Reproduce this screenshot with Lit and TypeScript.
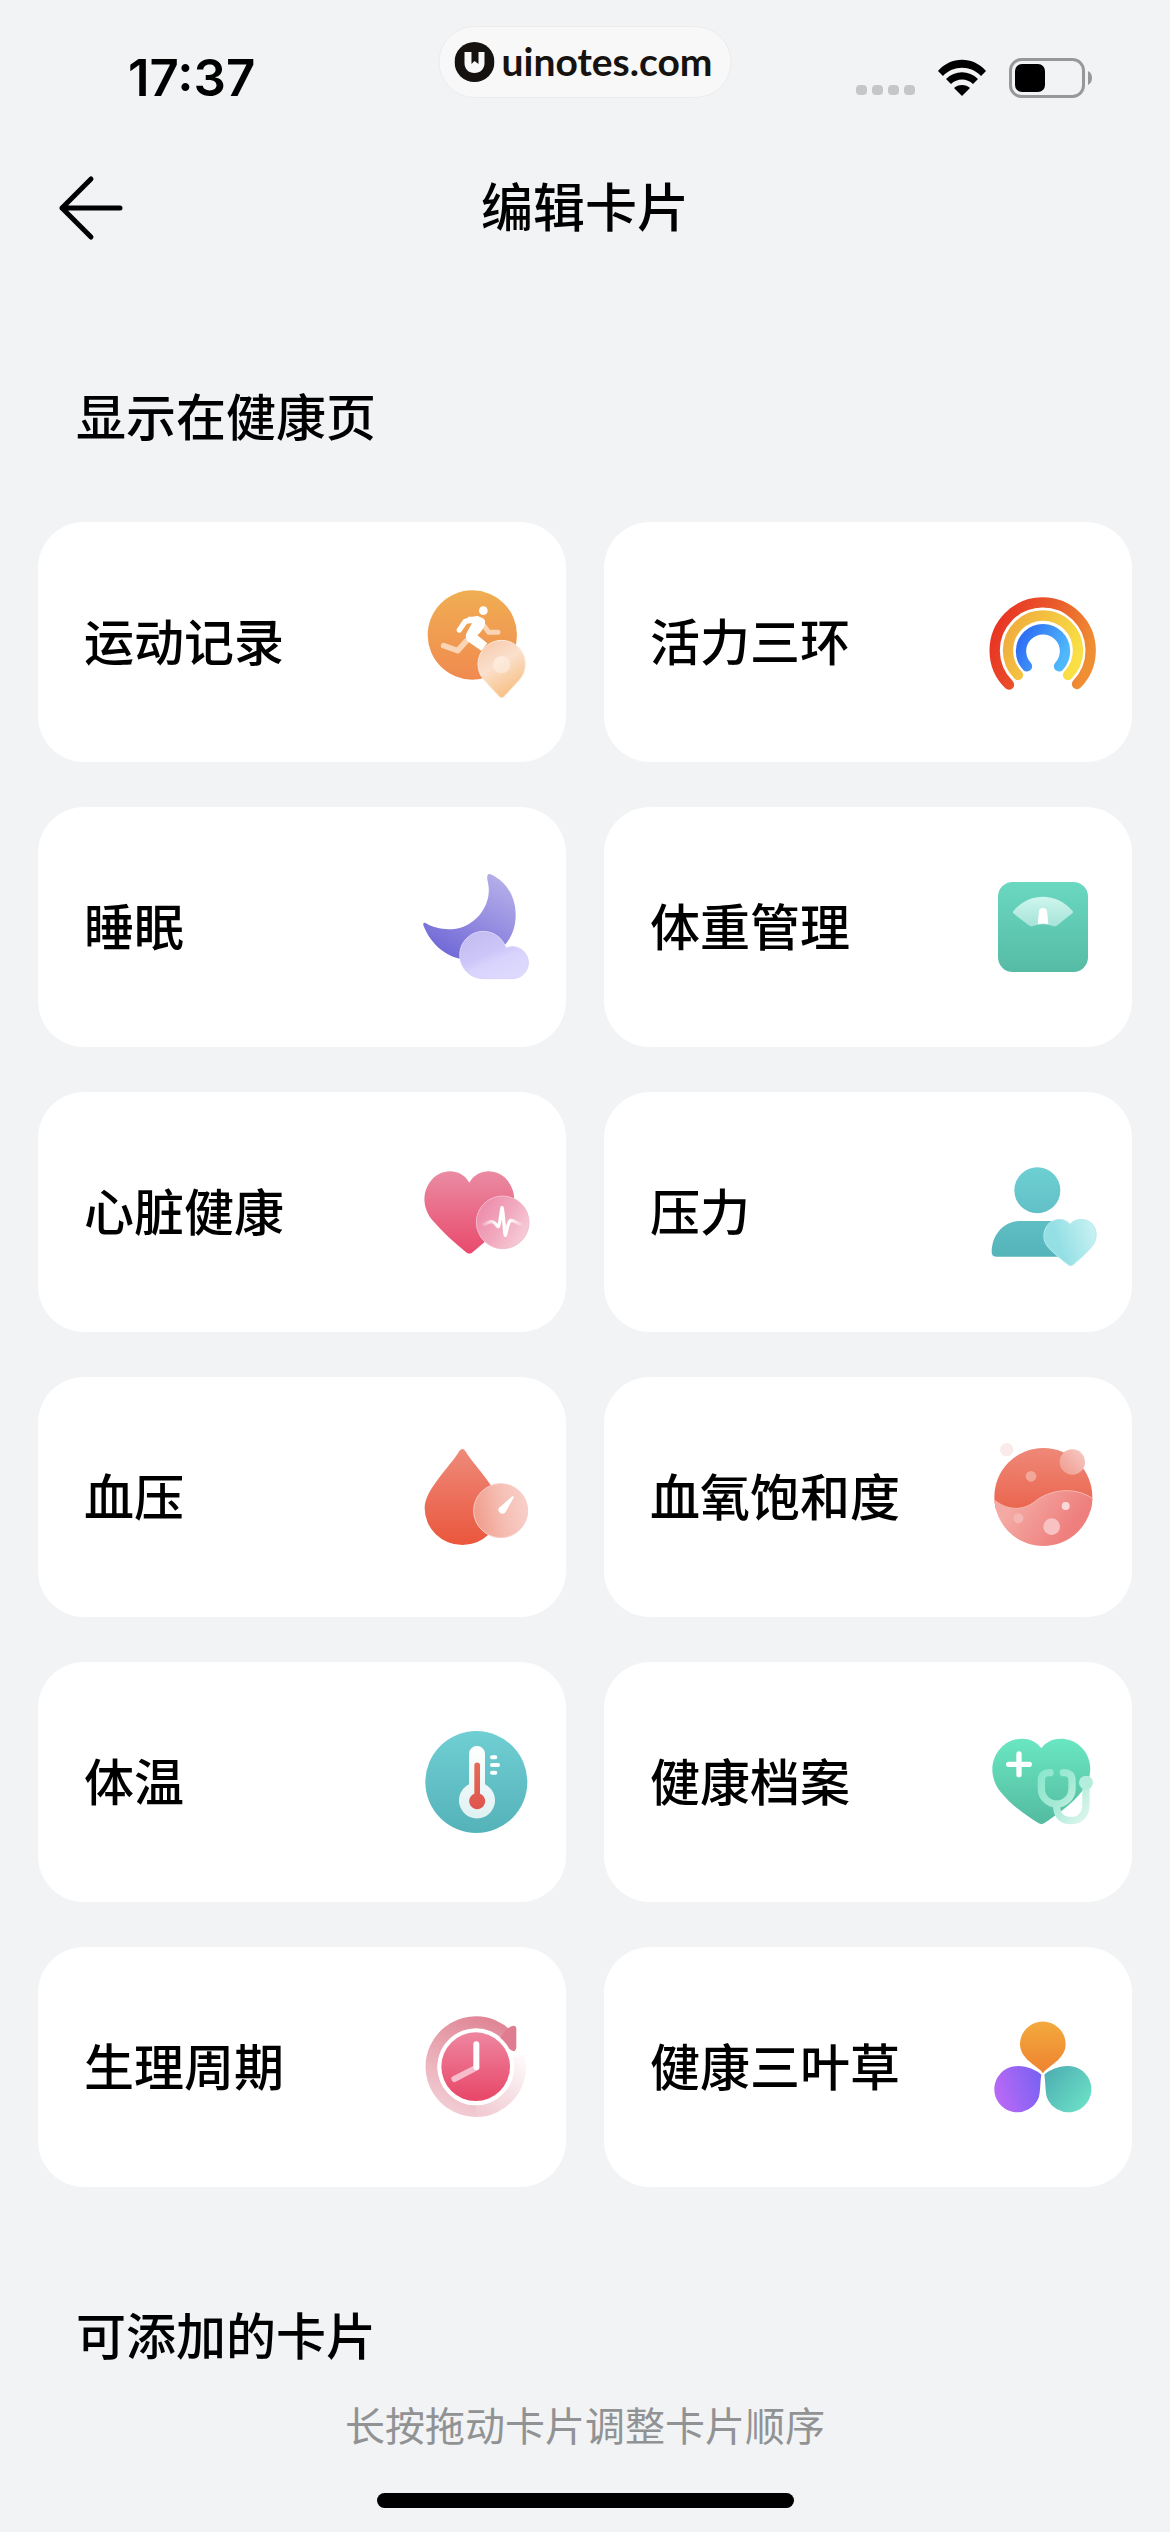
import { LitElement, css, html, svg } from 'lit';
import { customElement, property } from 'lit/decorators.js';

// Each drawing carries its own viewBox, always 360 units square.
const icons = {
  run: {
    box: '48 66 360 360',
    art: svg`
      <defs>
        <linearGradient id="a" x1="0" y1="0" x2="0" y2="1"><stop offset="0" stop-color="#f0ae52" /><stop offset="1" stop-color="#f08a50" /></linearGradient>
        <linearGradient id="b" x1="0" y1="0" x2="0.5" y2="1"><stop offset="0" stop-color="#f5c6a8" /><stop offset="0.5" stop-color="#fbe0cc" /><stop offset="1" stop-color="#f7c187" /></linearGradient>
        <linearGradient id="c" x1="0" y1="0" x2="1" y2="1"><stop offset="0" stop-color="#fdeee2" /><stop offset="1" stop-color="#fbe3cf" /></linearGradient>
      </defs>
      <circle cx="217" cy="225" r="134" fill="url(#a)" />
      <path d="M131 257 L173 272 L198 244" fill="none" stroke="#f9d5b5" stroke-width="17" stroke-linecap="round" stroke-linejoin="round" />
      <path d="M254 200 L266 217 L294 217" fill="none" stroke="#f9d5b5" stroke-width="15" stroke-linecap="round" stroke-linejoin="round" />
      <circle cx="250" cy="152" r="13" fill="#fff" />
      <path d="M178 210 L196 184 L232 176" fill="none" stroke="#fff" stroke-width="16" stroke-linecap="round" stroke-linejoin="round" />
      <path d="M204 170 H236 Q260 174 255 192 Q250 210 232 226 L262 250 L244 272 L206 246 Q192 234 200 218 L216 190 L200 190 Z" fill="#fff" />
      <path d="M305 413 Q300 413 295 407 L252 360 Q234 340 234 312 A71 71 0 0 1 376 312 Q376 340 358 360 L315 407 Q310 413 305 413 Z" fill="url(#b)" stroke="#fdeadb" stroke-width="3" />
      <circle cx="305" cy="314" r="26" fill="url(#c)" />`,
  },
  rings: {
    box: '66 66 360 360',
    art: svg`
      <defs>
        <linearGradient id="a" x1="0" y1="0.3" x2="1" y2="0.6"><stop offset="0" stop-color="#e83424" /><stop offset="0.5" stop-color="#ea5a2b" /><stop offset="1" stop-color="#f08e33" /></linearGradient>
        <linearGradient id="b" x1="0" y1="0.3" x2="1" y2="0.7"><stop offset="0" stop-color="#f0ae3e" /><stop offset="1" stop-color="#f9e045" /></linearGradient>
        <linearGradient id="c" x1="0" y1="0.3" x2="1" y2="0.7"><stop offset="0" stop-color="#2f70f5" /><stop offset="1" stop-color="#4fb8fb" /></linearGradient>
      </defs>
      <g fill="none" stroke-width="31" stroke-linecap="round">
        <path d="M147 374 A144 144 0 1 1 351 372" stroke="url(#a)" />
        <path d="M174 345 A105 105 0 1 1 324 345" stroke="url(#b)" />
        <path d="M201 319 A66 66 0 1 1 297 319" stroke="url(#c)" />
      </g>`,
  },
  sleep: {
    box: '48 51 360 360',
    art: svg`
      <defs>
        <linearGradient id="a" x1="0.9" y1="0" x2="0.3" y2="1"><stop offset="0" stop-color="#b9b3ea" /><stop offset="0.45" stop-color="#9a92e2" /><stop offset="1" stop-color="#6f68d6" /></linearGradient>
        <linearGradient id="b" x1="0.2" y1="0" x2="0.8" y2="1"><stop offset="0" stop-color="#c3bcf0" /><stop offset="0.45" stop-color="#cdc6f8" /><stop offset="0.6" stop-color="#d8d3fd" /><stop offset="1" stop-color="#dedafc" /></linearGradient>
      </defs>
      <path d="M262 77 Q264 69 272 73 C322 96 348 144 347 198 C346 276 286 330 210 330 C144 330 92 284 70 226 Q68 215 77 219 C108 238 152 244 190 230 C240 210 270 160 266 112 C265 98 260 88 262 77 Z" fill="url(#a)" />
      <path d="M252 386 A71 71 0 1 1 318 294 A48 48 0 1 1 336 386 Z" fill="url(#b)" stroke="#d9d4fa" stroke-width="3" />`,
  },
  scale: {
    box: '66 51 360 360',
    art: svg`
      <defs>
        <linearGradient id="a" x1="0" y1="0" x2="0" y2="1"><stop offset="0" stop-color="#6bd8c1" /><stop offset="1" stop-color="#56bba5" /></linearGradient>
        <linearGradient id="b" x1="0" y1="0" x2="0" y2="1"><stop offset="0" stop-color="#cef6ee" /><stop offset="1" stop-color="#a6e3d7" /></linearGradient>
      </defs>
      <rect x="114" y="96" width="270" height="270" rx="44" fill="url(#a)" />
      <path d="M160 190 Q157 186 161 182 C208 126 290 126 337 182 Q341 186 337 190 L292 226 Q286 231 279 228 Q249 218 219 228 Q212 231 206 226 Z" fill="url(#b)" />
      <path d="M233 222 L237 183 Q239 174 249 174 Q259 174 261 183 L265 222 Q249 219 233 222 Z" fill="#fff" />`,
  },
  heart: {
    box: '48 36 360 360',
    art: svg`
      <defs>
        <linearGradient id="a" x1="0" y1="0" x2="0" y2="1"><stop offset="0" stop-color="#ea8ba3" /><stop offset="1" stop-color="#e94a6c" /></linearGradient>
        <linearGradient id="b" x1="0.1" y1="0.3" x2="0.9" y2="0.8"><stop offset="0" stop-color="#ee90ae" /><stop offset="0.5" stop-color="#f1aabf" /><stop offset="1" stop-color="#f6cbd7" /></linearGradient>
        <linearGradient id="c" gradientUnits="userSpaceOnUse" x1="250" y1="0" x2="364" y2="0"><stop offset="0" stop-color="#fff" stop-opacity="0.2" /><stop offset="0.35" stop-color="#fff" /><stop offset="0.7" stop-color="#fff" /><stop offset="1" stop-color="#fff" stop-opacity="0.2" /></linearGradient>
      </defs>
      <path d="M208 128 C186 88 134 84 102 112 C64 150 64 202 100 244 C130 278 162 308 200 338 Q208 343 216 338 C254 308 286 278 316 244 C352 202 352 150 314 112 C282 84 230 88 208 128 Z" fill="url(#a)" />
      <circle cx="308" cy="247" r="79" fill="url(#b)" stroke="#f5bccb" stroke-width="3" />
      <path d="M252 253 C262 250 268 243 276 245 C286 247 290 258 295 260 C300 255 303 215 306 203 C311 215 312 275 316 286 C320 275 322 250 332 241 C344 240 350 250 362 252" fill="none" stroke="url(#c)" stroke-width="10" stroke-linecap="round" stroke-linejoin="round" />`,
  },
  stress: {
    box: '66 36 360 360',
    art: svg`
      <defs>
        <linearGradient id="a" gradientUnits="userSpaceOnUse" x1="0" y1="82" x2="0" y2="350"><stop offset="0" stop-color="#6ecfd3" /><stop offset="1" stop-color="#55b3ba" /></linearGradient>
        <linearGradient id="b" x1="0.3" y1="0.6" x2="1" y2="0.4"><stop offset="0" stop-color="#93dfe4" /><stop offset="1" stop-color="#c6f1f2" /></linearGradient>
      </defs>
      <circle cx="232" cy="151" r="69" fill="url(#a)" />
      <path d="M95 336 C95 284 132 243 182 243 H300 V350 H108 Q95 350 95 336 Z" fill="url(#a)" />
      <path d="M330 253 C316 234 286 234 268 249 C246 271 246 304 268 326 C286 344 308 362 326 375 Q332 379 338 375 C356 360 374 344 390 326 C414 302 414 269 394 249 C376 234 344 234 330 253 Z" fill="url(#b)" stroke="#b4ebee" stroke-width="3" />`,
  },
  pressure: {
    box: '0 0 360 360',
    art: svg`
      <defs>
        <linearGradient id="a" x1="0" y1="0" x2="0" y2="1"><stop offset="0" stop-color="#ee8a7a" /><stop offset="1" stop-color="#ea563c" /></linearGradient>
        <linearGradient id="b" x1="0" y1="0.6" x2="1" y2="0.4"><stop offset="0" stop-color="#f09c8a" /><stop offset="0.5" stop-color="#f5bcb1" /><stop offset="1" stop-color="#f8d0ca" /></linearGradient>
      </defs>
      <path d="M130 42 Q139 30 148 42 C178 92 252 158 252 214 A113 110 0 0 1 26 214 C26 158 100 92 130 42 Z" fill="url(#a)" />
      <circle cx="254" cy="221" r="81" fill="url(#b)" stroke="#f8cdc5" stroke-width="3" />
      <path d="M286 180 Q293 173 293 182 L269 225 A12 12 0 0 1 248 214 Z" fill="#fff" />`,
  },
  oxygen: {
    box: '0 0 360 360',
    art: svg`
      <defs>
        <linearGradient id="a" gradientUnits="userSpaceOnUse" x1="0" y1="33" x2="0" y2="210"><stop offset="0" stop-color="#ef8878" /><stop offset="1" stop-color="#ea6750" /></linearGradient>
        <linearGradient id="b" gradientUnits="userSpaceOnUse" x1="90" y1="200" x2="240" y2="310"><stop offset="0" stop-color="#f4aaa4" /><stop offset="1" stop-color="#ee7f7d" /></linearGradient>
        <linearGradient id="c" x1="0" y1="1" x2="1" y2="0"><stop offset="0" stop-color="#f09a8c" /><stop offset="1" stop-color="#f6cac6" /></linearGradient>
        <clipPath id="d"><circle cx="184" cy="180" r="147" /></clipPath>
      </defs>
      <g clip-path="url(#d)">
        <rect x="30" y="30" width="310" height="190" fill="url(#a)" />
        <path d="M34 187 C76 222 122 222 158 194 C202 158 278 146 334 186 V330 H34 Z" fill="url(#b)" stroke="#f6b9b2" stroke-width="3" />
      </g>
      <circle cx="271" cy="75" r="38" fill="url(#c)" />
      <circle cx="74" cy="38" r="20" fill="#fbeaea" />
      <circle cx="147" cy="118" r="16" fill="#f3a79b" />
      <circle cx="251" cy="207" r="12" fill="#fad9d8" />
      <circle cx="109" cy="244" r="15" fill="#f5b7b4" />
      <circle cx="209" cy="269" r="25" fill="#f7c2c1" />`,
  },
  temperature: {
    box: '0 0 360 360',
    art: svg`
      <defs>
        <linearGradient id="a" x1="0" y1="0" x2="0" y2="1"><stop offset="0" stop-color="#70cfd3" /><stop offset="1" stop-color="#54b2b9" /></linearGradient>
        <linearGradient id="b" x1="0" y1="0" x2="0" y2="1"><stop offset="0" stop-color="#fff" /><stop offset="1" stop-color="#dff1f2" /></linearGradient>
        <linearGradient id="c" x1="0" y1="0" x2="0" y2="1"><stop offset="0" stop-color="#e56b55" /><stop offset="1" stop-color="#e0554f" /></linearGradient>
      </defs>
      <circle cx="181" cy="180" r="153" fill="url(#a)" />
      <path d="M159 96 A24 24 0 0 1 207 96 V187 A54 54 0 1 1 159 187 Z" fill="url(#b)" />
      <path d="M175 130 A8 8 0 0 1 192 130 V215 A24 24 0 1 1 175 215 Z" fill="url(#c)" />
      <path d="M228 106 H238 M228 129 H246 M228 152 H238" stroke="#fff" stroke-width="12" stroke-linecap="round" />`,
  },
  records: {
    box: '0 0 360 360',
    art: svg`
      <defs>
        <linearGradient id="a" x1="0" y1="0" x2="0" y2="1"><stop offset="0" stop-color="#6ae6c2" /><stop offset="1" stop-color="#54bba0" /></linearGradient>
        <linearGradient id="b" gradientUnits="userSpaceOnUse" x1="180" y1="150" x2="320" y2="260"><stop offset="0" stop-color="#8ce8cd" /><stop offset="0.5" stop-color="#a6e9d5" /><stop offset="1" stop-color="#d5f4ea" /></linearGradient>
      </defs>
      <path d="M178 79 C152 42 96 42 62 72 C20 112 24 168 54 208 C86 248 126 276 170 304 Q178 309 186 304 C226 278 270 246 300 208 C332 168 336 110 294 72 C260 42 204 42 178 79 Z" fill="url(#a)" />
      <path d="M111 96 V158 M80 127 H142" stroke="#fff" stroke-width="16" stroke-linecap="round" />
      <g fill="none" stroke="url(#b)" stroke-width="22" stroke-linecap="round">
        <path d="M204 152 Q178 150 178 176 V200 A46 46 0 0 0 270 200 V176 Q270 150 244 152" />
        <path d="M224 252 C224 280 240 296 268 296 C294 296 312 276 312 250 V184" stroke-linecap="butt" />
      </g>
      <circle cx="312" cy="182" r="21" fill="#b5eddd" />`,
  },
  cycle: {
    box: '0 0 360 360',
    art: svg`
      <defs>
        <linearGradient id="a" gradientUnits="userSpaceOnUse" x1="240" y1="40" x2="130" y2="320"><stop offset="0" stop-color="#df8594" /><stop offset="0.5" stop-color="#eaaab5" /><stop offset="1" stop-color="#f1ccd4" /></linearGradient>
        <linearGradient id="b" gradientUnits="userSpaceOnUse" x1="310" y1="140" x2="200" y2="320"><stop offset="0" stop-color="#fefafb" /><stop offset="1" stop-color="#f1ccd4" /></linearGradient>
        <linearGradient id="c" x1="0" y1="0" x2="0" y2="1"><stop offset="0" stop-color="#ee86a0" /><stop offset="1" stop-color="#e84668" /></linearGradient>
      </defs>
      <path d="M179 312 A133 133 0 0 0 308 146" fill="none" stroke="url(#b)" stroke-width="36" />
      <path d="M180 312 A133 133 0 1 1 282 94" fill="none" stroke="url(#a)" stroke-width="36" />
      <path d="M272 66 L286 58 Q300 52 301 66 V120 Q299 138 286 130 L244 104 Z" fill="#e07c90" />
      <circle cx="179" cy="180" r="115" fill="#fff" />
      <circle cx="179" cy="179" r="103" fill="url(#c)" />
      <path d="M115 216 L181 182" stroke="#f6bccb" stroke-width="18" stroke-linecap="round" />
      <path d="M181 112 V180" stroke="#fff" stroke-width="18" stroke-linecap="round" />`,
  },
  clover: {
    box: '0 0 360 360',
    art: svg`
      <defs>
        <linearGradient id="a" x1="0" y1="0" x2="0" y2="1"><stop offset="0" stop-color="#f2aa3e" /><stop offset="1" stop-color="#ef822f" /></linearGradient>
        <linearGradient id="b" x1="0" y1="0.6" x2="1" y2="0.3"><stop offset="0" stop-color="#bb69f5" /><stop offset="1" stop-color="#7a62f3" /></linearGradient>
        <linearGradient id="c" x1="0" y1="0.2" x2="1" y2="1"><stop offset="0" stop-color="#4fb0b2" /><stop offset="1" stop-color="#6fe6c9" /></linearGradient>
      </defs>
      <path d="M183 199 C170 178 114 158 114 112 A68 68 0 0 1 251 112 C251 158 196 178 183 199 Z" fill="url(#a)" />
      <path d="M178 203 C164 190 130 174 98 178 A69 69 0 1 0 170 272 C176 252 174 226 178 203 Z" fill="url(#b)" />
      <path d="M187 203 C201 190 235 174 267 178 A69 69 0 1 1 195 272 C189 252 191 226 187 203 Z" fill="url(#c)" />`,
  },
};

type IconName = keyof typeof icons;

const shownCards: { label: string; icon: IconName }[] = [
  { label: '运动记录', icon: 'run' },
  { label: '活力三环', icon: 'rings' },
  { label: '睡眠', icon: 'sleep' },
  { label: '体重管理', icon: 'scale' },
  { label: '心脏健康', icon: 'heart' },
  { label: '压力', icon: 'stress' },
  { label: '血压', icon: 'pressure' },
  { label: '血氧饱和度', icon: 'oxygen' },
  { label: '体温', icon: 'temperature' },
  { label: '健康档案', icon: 'records' },
  { label: '生理周期', icon: 'cycle' },
  { label: '健康三叶草', icon: 'clover' },
];

@customElement('health-card')
export class HealthCard extends LitElement {
  static styles = css`
    :host {
      display: flex;
      align-items: center;
      justify-content: space-between;
      box-sizing: border-box;
      height: 240px;
      padding: 0 30px 0 46px;
      border-radius: 46px;
      background: #fff;
    }

    .label {
      padding-bottom: 6px;
      font-size: 50px;
      font-weight: 500;
      line-height: 64px;
      white-space: nowrap;
    }

    .icon {
      display: block;
      flex: none;
      width: 120px;
      height: 120px;
    }
  `;

  @property() label = '';
  @property() icon: IconName = 'run';

  render() {
    const { box, art } = icons[this.icon];
    return html`
      <span class="label">${this.label}</span>
      <svg class="icon" viewBox=${box} aria-hidden="true">${art}</svg>
    `;
  }
}

@customElement('status-bar')
export class StatusBar extends LitElement {
  static styles = css`
    :host {
      display: flex;
      position: relative;
      align-items: center;
      justify-content: space-between;
      height: 156px;
      padding: 0 78px 0 128px;
    }

    .time {
      font: 600 51px/60px Inter, "Liberation Sans", sans-serif;
    }

    .badge {
      display: flex;
      position: absolute;
      top: 26px;
      left: 50%;
      align-items: center;
      gap: 7px;
      box-sizing: border-box;
      height: 72px;
      padding: 0 18px 0 15px;
      border: 1px solid #ececec;
      border-radius: 36px;
      background: #f8f8f8;
      color: #16120f;
      font: 700 39px/48px Lato, "Liberation Sans", sans-serif;
      transform: translateX(-50%);
    }

    .mark {
      width: 40px;
      height: 40px;
    }

    .domain {
      padding-bottom: 2px;
    }

    .signals {
      display: flex;
      align-items: center;
      gap: 22px;
    }

    .dots {
      display: flex;
      align-self: flex-end;
      gap: 5px;
      padding-bottom: 3px;
    }

    .dots i {
      width: 11px;
      height: 10px;
      border-radius: 4px;
      background: #c5c6c7;
    }

    .wifi {
      width: 50px;
      height: 38px;
    }

    .battery {
      width: 83px;
      height: 40px;
    }
  `;

  render() {
    return html`
      <span class="time">17:37</span>
      <div class="badge">
        <svg class="mark" viewBox="0 0 40 40" aria-hidden="true">
          <circle cx="20" cy="20" r="20" fill="#16120f" />
          <path d="M10 10 H17 V22 L20 19 L24 22 V10 H30 V21 C30 27 26 31 20 31 C14 31 10 27 10 21 Z" fill="#f8f8f8" />
        </svg>
        <span class="domain">uinotes.com</span>
      </div>
      <div class="signals">
        <div class="dots"><i></i><i></i><i></i><i></i></div>
        <svg class="wifi" viewBox="0 0 50 38" aria-hidden="true">
          <path d="M1 12 C14 -3 36 -3 49 12 L44 17 C34 6 16 6 6 17 Z" />
          <path d="M9 20 C18 11 32 11 41 20 L36 25 C30 19 20 19 14 25 Z" />
          <path d="M17 29 C21 25 29 25 33 29 L25 37 Z" />
        </svg>
        <svg class="battery" viewBox="0 0 83 40" aria-hidden="true">
          <rect x="1.5" y="1.5" width="73" height="37" rx="11" fill="none" stroke="#979899" stroke-width="3" />
          <path d="M79 13 Q83 15 83 20 Q83 25 79 27 Z" fill="#979899" />
          <rect x="6" y="6" width="30" height="28" rx="7" />
        </svg>
      </div>
    `;
  }
}

@customElement('app-root')
export class AppRoot extends LitElement {
  static styles = css`
    :host {
      display: flex;
      flex-direction: column;
      min-height: 100vh;
      background: #f1f3f5;
      color: #000;
      font-family: "Noto Sans CJK SC", sans-serif;
    }

    .header {
      display: grid;
      grid-template-columns: 1fr auto 1fr;
      align-items: center;
      height: 104px;
      margin-bottom: 8px;
      padding: 0 58px;
    }

    .back {
      display: block;
      width: 66px;
      height: 66px;
      padding: 0;
      border: 0;
      background: none;
      cursor: pointer;
    }

    .back svg {
      display: block;
      width: 100%;
      height: 100%;
    }

    .title {
      margin: 0;
      padding-bottom: 6px;
      font-size: 52px;
      font-weight: 500;
      line-height: 64px;
    }

    .section-title {
      margin: 0;
      padding: 114px 76px 76px;
      font-size: 50px;
      font-weight: 500;
      line-height: 64px;
    }

    .section-title.last {
      padding-bottom: 0;
    }

    .cards {
      display: grid;
      grid-template-columns: repeat(2, minmax(0, 1fr));
      gap: 45px 38px;
      margin: 0;
      padding: 0 38px;
      list-style: none;
    }

    .footer {
      display: flex;
      flex-direction: column;
      align-items: center;
      gap: 45px;
      margin-top: auto;
      padding-bottom: 24px;
    }

    .hint {
      margin: 0;
      color: #919293;
      font-size: 40px;
      font-weight: 400;
      line-height: 48px;
    }

    .home {
      width: 417px;
      height: 15px;
      border-radius: 8px;
      background: #000;
    }
  `;

  render() {
    return html`
      <status-bar></status-bar>
      <header class="header">
        <button class="back" aria-label="返回">
          <svg viewBox="0 0 66 66" fill="none" stroke="#000" stroke-width="5" stroke-linecap="round" stroke-linejoin="round">
            <path d="M33 4 L4 33 L33 62 M4 33 H62" />
          </svg>
        </button>
        <h1 class="title">编辑卡片</h1>
      </header>
      <main>
        <h2 class="section-title">显示在健康页</h2>
        <ul class="cards">
          ${shownCards.map(card => html`
            <li><health-card label=${card.label} icon=${card.icon}></health-card></li>
          `)}
        </ul>
        <h2 class="section-title last">可添加的卡片</h2>
      </main>
      <footer class="footer">
        <p class="hint">长按拖动卡片调整卡片顺序</p>
        <div class="home"></div>
      </footer>
    `;
  }
}
